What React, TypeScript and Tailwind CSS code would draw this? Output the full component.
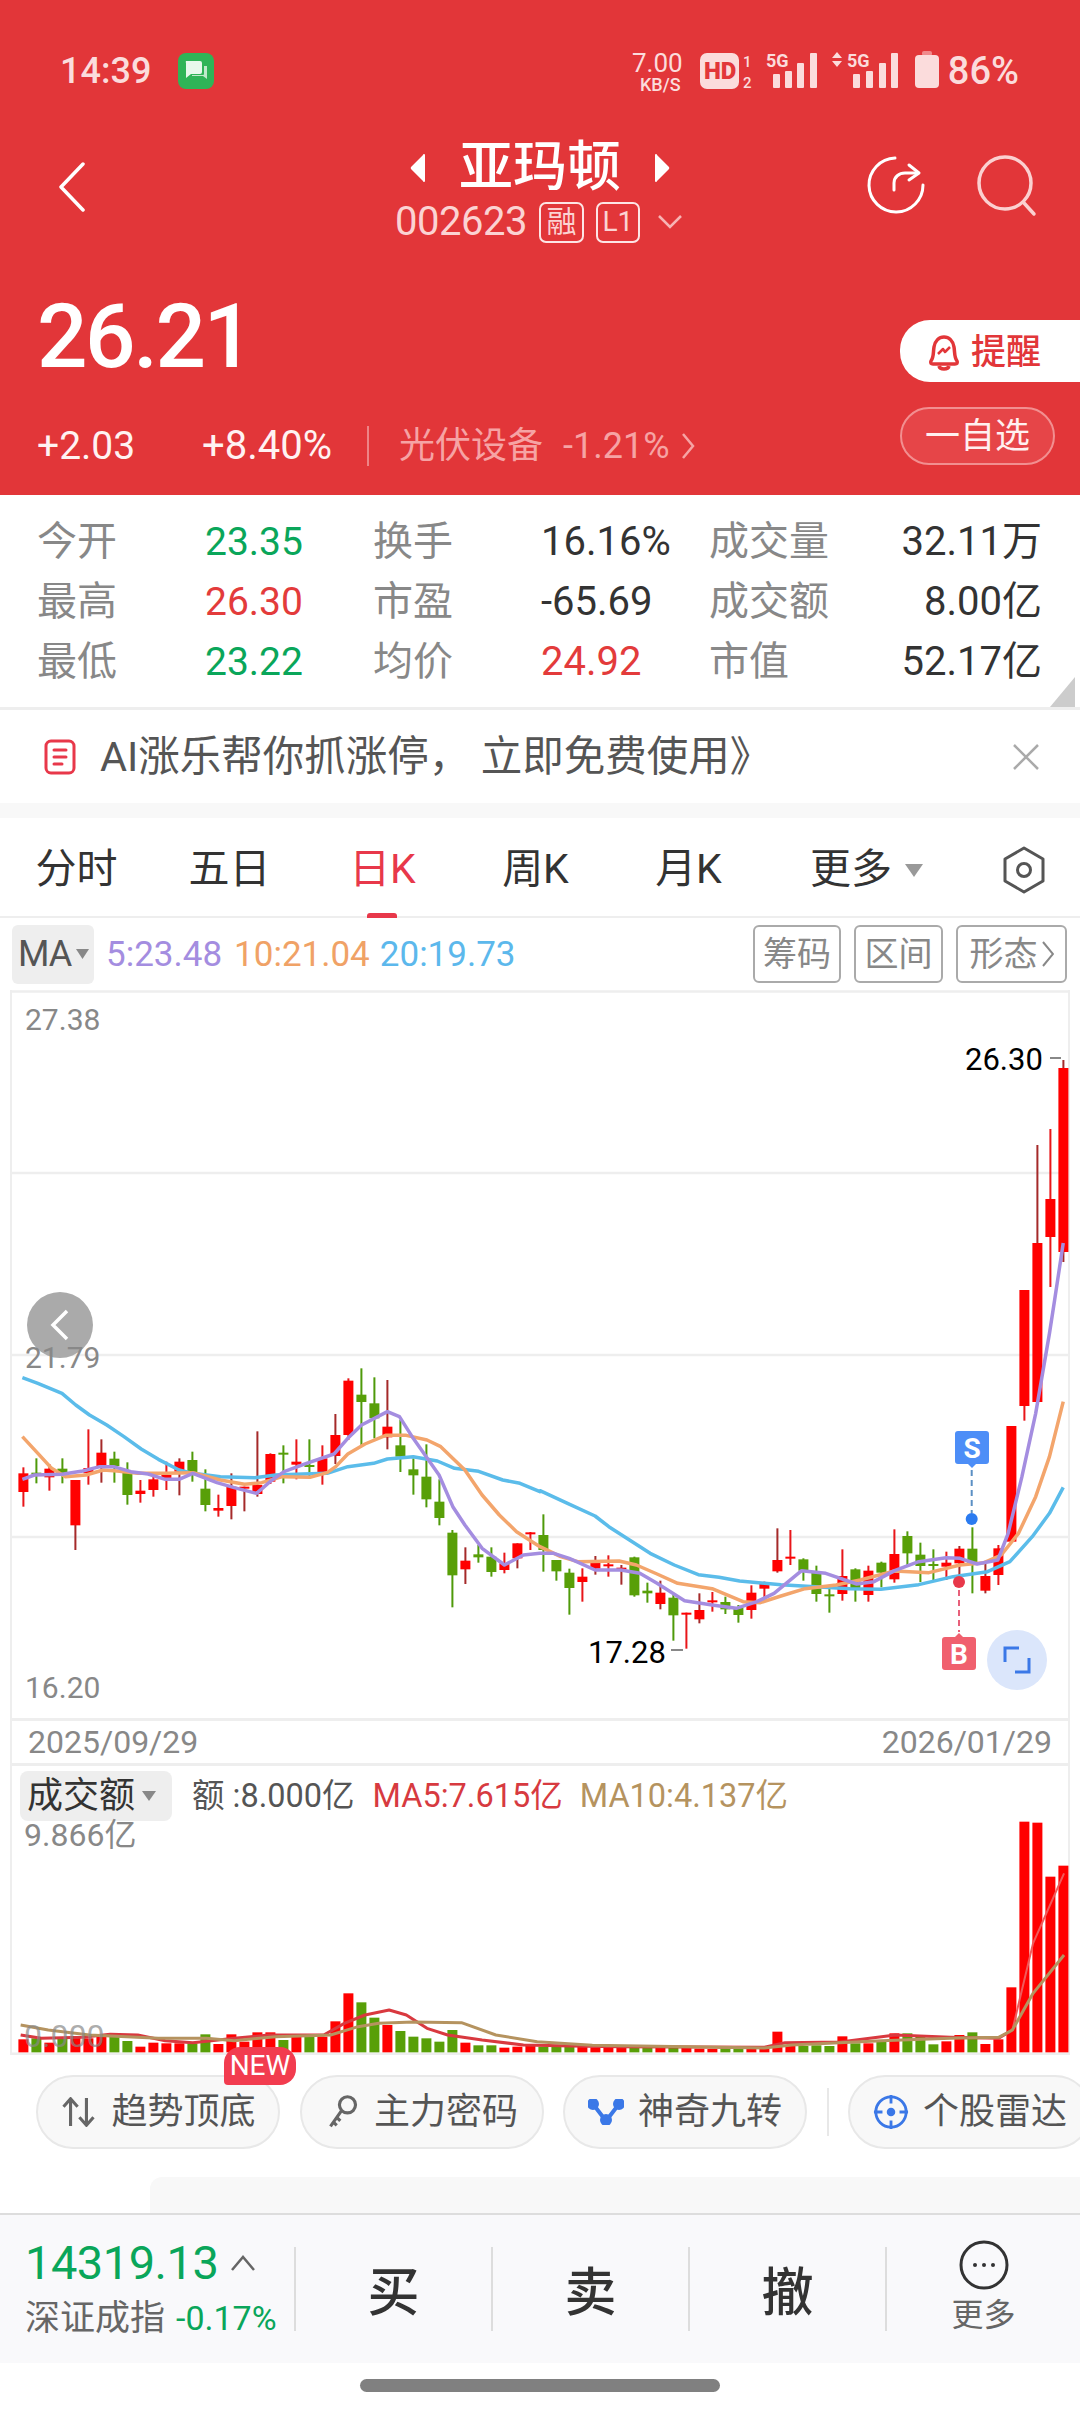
const FONT = "font-['Roboto','Noto_Sans_CJK_SC',sans-serif]";

type Color = 'r' | 'g';
// high, low, body top, body bottom, colour, dark wick. y values are 3x offsets from y=1300
type Candle = [number, number, number, number, Color, number?];

const CANDLES: Candle[] = [
  [502, 620, 520, 576, 'r'], [475, 550, 518, 522, 'g'], [492, 572, 506, 532, 'r'], [475, 550, 506, 520, 'g'],
  [540, 750, 540, 676, 'r', 1], [388, 554, 504, 520, 'r'], [418, 548, 458, 500, 'r', 1], [455, 548, 476, 498, 'g'],
  [487, 614, 514, 585, 'g'], [540, 608, 572, 582, 'r'], [530, 590, 538, 570, 'r'], [485, 570, 525, 535, 'r'],
  [475, 586, 485, 515, 'r', 1], [455, 545, 480, 518, 'g'], [508, 634, 566, 615, 'g'], [584, 650, 624, 632, 'r'],
  [520, 658, 560, 618, 'r', 1], [560, 634, 560, 562, 'r', 1], [394, 590, 555, 582, 'r', 1], [460, 552, 462, 545, 'r'],
  [436, 550, 458, 464, 'g'], [418, 538, 485, 494, 'r'], [418, 535, 495, 500, 'g'], [436, 554, 475, 520, 'r'],
  [342, 492, 405, 468, 'r', 1], [235, 420, 242, 405, 'r'], [205, 435, 284, 306, 'g'], [232, 415, 310, 355, 'g'],
  [240, 448, 380, 412, 'r', 1], [360, 516, 436, 470, 'g'], [475, 584, 508, 526, 'g'], [433, 622, 530, 598, 'g'],
  [538, 676, 605, 654, 'g'], [690, 922, 698, 826, 'g'], [742, 852, 782, 808, 'r', 1], [735, 788, 763, 772, 'g'],
  [742, 830, 770, 816, 'g'], [758, 820, 790, 810, 'r'], [730, 805, 730, 775, 'r', 1], [696, 750, 697, 702, 'r'],
  [643, 815, 705, 750, 'g'], [780, 842, 780, 814, 'g'], [806, 944, 818, 864, 'g'], [805, 905, 830, 846, 'r'],
  [768, 824, 788, 806, 'r', 1], [766, 830, 793, 797, 'r'], [795, 854, 803, 806, 'r', 1], [770, 890, 772, 886, 'g'],
  [848, 908, 872, 880, 'g'], [842, 928, 878, 912, 'r', 1], [885, 1022, 893, 946, 'g'], [938, 1046, 938, 944, 'r'],
  [880, 970, 930, 958, 'r', 1], [876, 935, 901, 905, 'r'], [890, 942, 906, 928, 'g'], [915, 968, 922, 945, 'g'],
  [856, 956, 878, 930, 'r'], [845, 895, 848, 866, 'r'], [685, 818, 780, 814, 'r', 1], [690, 795, 770, 774, 'r'],
  [775, 842, 778, 812, 'g'], [797, 905, 818, 882, 'g'], [860, 938, 883, 887, 'g'], [748, 902, 828, 882, 'r'],
  [805, 905, 808, 866, 'g'], [797, 905, 812, 885, 'r'], [785, 862, 788, 818, 'g'], [688, 848, 762, 838, 'r'],
  [694, 800, 708, 760, 'g'], [728, 846, 764, 798, 'g'], [748, 846, 792, 796, 'g'], [755, 840, 788, 800, 'r'],
  [738, 860, 746, 790, 'r', 1], [682, 880, 746, 790, 'g'], [790, 880, 828, 872, 'r', 1], [735, 855, 745, 825, 'r'],
  [378, 725, 378, 725, 'r'], [-30, 362, -30, 318, 'r'], [-465, 306, -171, 306, 'r', 1], [-513, -39, -303, -189, 'r'],
  [-720, -114, -696, -144, 'r', 1],
];

const VOLUME_TOPS = [
  1018, 1015, 1028, 1012, 1012, 1015, 1008, 1010, 1023, 1040, 1028, 1030, 1030, 1030, 1003, 1032, 1003, 1025, 997, 997,
  1020, 1005, 1003, 1010, 964, 880, 907, 953, 975, 993, 1010, 1015, 1025, 990, 1028, 1036, 1036, 1043, 1040, 1037, 1040,
  1036, 1034, 1040, 1042, 1042, 1044, 1040, 1044, 1044, 1042, 1040, 1046, 1047, 1045, 1046, 1040, 1045, 995, 1037, 1038,
  1036, 1038, 1009, 1030, 1030, 1022, 1000, 1000, 1008, 1033, 1024, 1005, 997, 1032, 1018, 862, 365, 368, 530, 497,
];

type Pt = [number, number];

const BLUE_L: Pt[] = [[65, 233], [110, 250], [180, 280], [220, 315], [260, 345], [310, 375], [360, 410], [410, 447], [460, 478], [520, 510], [560, 520], [640, 530], [740, 533], [800, 525], [880, 522], [950, 520], [1010, 500], [1085, 490], [1125, 477], [1200, 470], [1270, 483], [1320, 505], [1390, 514], [1460, 540], [1510, 550], [1568, 575]];
const BLUE_R: Pt[] = [[0, 572], [80, 610], [160, 648], [200, 680], [260, 720], [320, 760], [390, 795], [460, 824], [520, 832], [580, 843], [700, 854], [800, 860], [900, 866], [990, 868], [1100, 854], [1200, 830], [1300, 815], [1365, 785], [1430, 710], [1480, 640], [1520, 562]];
const ORANGE_L: Pt[] = [[65, 410], [110, 460], [150, 505], [190, 530], [250, 525], [300, 510], [340, 513], [400, 520], [480, 520], [560, 518], [640, 540], [710, 553], [760, 548], [820, 530], [900, 532], [950, 518], [975, 500], [1010, 462], [1060, 432], [1120, 406], [1180, 406], [1240, 420], [1280, 440], [1350, 510], [1400, 585], [1450, 645], [1500, 695], [1568, 740]];
const ORANGE_R: Pt[] = [[0, 740], [60, 770], [110, 785], [230, 783], [280, 795], [340, 822], [400, 850], [500, 866], [590, 905], [640, 908], [700, 888], [770, 866], [860, 855], [930, 840], [1030, 813], [1130, 818], [1220, 795], [1290, 788], [1340, 765], [1390, 700], [1440, 590], [1480, 470], [1520, 305]];
const PURPLE_L: Pt[] = [[65, 538], [100, 525], [180, 523], [240, 513], [290, 500], [330, 500], [380, 515], [430, 522], [480, 538], [520, 538], [560, 520], [630, 548], [680, 563], [745, 580], [790, 540], [825, 515], [890, 490], [970, 462], [1010, 415], [1050, 375], [1125, 335], [1160, 350], [1200, 415], [1275, 525], [1315, 620], [1350, 675], [1400, 745], [1465, 795], [1520, 765], [1568, 760]];
const PURPLE_R: Pt[] = [[0, 760], [40, 760], [85, 775], [160, 810], [235, 810], [290, 820], [340, 850], [420, 902], [500, 915], [570, 925], [630, 905], [680, 880], [760, 812], [830, 820], [920, 852], [970, 845], [1030, 812], [1100, 785], [1180, 773], [1220, 775], [1270, 792], [1330, 780], [1360, 700], [1400, 530], [1440, 340], [1480, 100], [1495, 0], [1520, -171]];

const VOL_MA5: Pt[] = [[30, 1005], [60, 1015], [120, 1012], [160, 1003], [200, 1005], [240, 1022], [280, 1028], [340, 1015], [390, 1005], [470, 1005], [500, 970], [530, 945], [565, 930], [590, 945], [620, 985], [650, 1005], [700, 1020], [760, 1035], [830, 1038], [900, 1040], [1110, 1042], [1140, 1028], [1220, 1026], [1300, 1005], [1380, 1012], [1450, 1015], [1470, 990]];
const VOL_MA5_TAIL: Pt[] = [[1470, 990], [1500, 730], [1545, 520]];
const VOL_MA10: Pt[] = [[30, 975], [70, 990], [130, 1005], [230, 1015], [300, 1015], [340, 1022], [400, 1010], [480, 1005], [520, 980], [550, 970], [600, 966], [670, 968], [720, 1005], [780, 1025], [860, 1036], [1000, 1040], [1110, 1044], [1150, 1035], [1280, 1022], [1380, 1015], [1450, 1012], [1470, 990], [1500, 880], [1545, 765]];

const y3 = (v: number) => 1300 + v / 3;
const candleX = (i: number) => 23.4 + i * 13;
const toPoints = (left: Pt[], right: Pt[]) =>
  [...left.map(([x, y]) => `${x / 2.904},${y3(y)}`), ...right.map(([x, y]) => `${540 + x / 2.905},${y3(y)}`)].join(' ');
const volPoints = (pts: Pt[]) => pts.map(([x, y]) => `${x / 1.452},${y / 3}`).join(' ');

function StatusBar() {
  return (
    <div className="flex h-[140px] items-center justify-between pl-[60px] pr-[61px] pt-[2px] text-[#fbdcdc]">
      <div className="flex items-center gap-[27px]">
        <span className="text-[36px] font-medium leading-none">14:39</span>
        <svg width="36" height="36" viewBox="0 0 36 36">
          <rect width="36" height="36" rx="8" fill="#2fb457" />
          <path d="M8 8h14a2 2 0 0 1 2 2v9a2 2 0 0 1-2 2H13l-5 4V10a2 2 0 0 1 0-2z" fill="#e8f8ec" />
          <path d="M26 13h3v13l-4-3H14v-1h11a1 1 0 0 0 1-1z" fill="#bfe9cb" />
        </svg>
      </div>
      <div className="flex items-center gap-[8px]">
        <svg width="310" height="50" viewBox="628 45 310 50" fill="#fbdcdc">
          <text x="630" y="71" fontSize="26" fontFamily="Roboto">7.00</text>
          <text x="638" y="90" fontSize="18" fontWeight="500" fontFamily="Roboto">KB/S</text>
          <rect x="698" y="52" width="39" height="36" rx="7" />
          <text x="702" y="78" fontSize="24" fontWeight="900" fontFamily="Roboto" fill="#e23639">HD</text>
          <text x="741" y="66" fontSize="15" fontWeight="500" fontFamily="Roboto">1</text>
          <text x="741" y="87" fontSize="15" fontWeight="500" fontFamily="Roboto">2</text>
          <text x="764" y="66" fontSize="18" fontWeight="700" fontFamily="Roboto">5G</text>
          <rect x="771" y="73" width="7" height="14" rx="1" />
          <rect x="783" y="70" width="7" height="17" rx="1" />
          <rect x="795" y="62" width="7" height="25" rx="1" />
          <rect x="808" y="52" width="7" height="35" rx="1" />
          <path d="M835 51l5 6h-10zM835 66l5-6h-10z" />
          <text x="845" y="66" fontSize="18" fontWeight="700" fontFamily="Roboto">5G</text>
          <rect x="851" y="73" width="7" height="14" rx="1" />
          <rect x="864" y="70" width="7" height="17" rx="1" />
          <rect x="877" y="62" width="7" height="25" rx="1" />
          <rect x="889" y="52" width="7" height="35" rx="1" />
          <rect x="920" y="50" width="10" height="5" rx="2" fill="#f08a8c" />
          <rect x="913" y="54" width="24" height="33" rx="4" />
        </svg>
        <span className="text-[38px] font-medium leading-none">86%</span>
      </div>
    </div>
  );
}

function NavRow() {
  return (
    <div className="grid h-[105px] grid-cols-[1fr_auto_1fr]">
      <div className="flex items-start pl-[58px] pt-[22px]">
        <svg width="28" height="50" viewBox="0 0 28 50" fill="none" stroke="#fff" strokeWidth="3.5" strokeLinecap="round" strokeLinejoin="round">
          <path d="M25 2 3 25l22 23" />
        </svg>
      </div>
      <div className="flex flex-col items-center">
        <div className="flex h-[56px] items-center gap-[32px] text-white">
          <svg width="18" height="28" viewBox="0 0 18 28" fill="#fff">
            <path d="M16 1v26a1 1 0 0 1-2 0L2 15a2 2 0 0 1 0-2L14 1a1 1 0 0 1 2 0z" />
          </svg>
          <span className="text-[54px] font-medium leading-none">亚玛顿</span>
          <svg width="18" height="28" viewBox="0 0 18 28" fill="#fff">
            <path d="M2 1v26a1 1 0 0 0 2 0l12-12a2 2 0 0 0 0-2L4 1a1 1 0 0 0-2 0z" />
          </svg>
        </div>
        <div className="-ml-[3px] mt-[5px] flex h-[42px] items-center text-[#fbd3d3]">
          <span className="text-[40px] leading-none tracking-[-0.5px]">002623</span>
          <span className="ml-[12px] flex h-[41px] w-[45px] items-center justify-center rounded-[7px] border-2 border-[#fde5e5] text-[30px] leading-none">融</span>
          <span className="ml-[12px] flex h-[41px] w-[44px] items-center justify-center rounded-[7px] border-2 border-[#fde5e5] text-[28px] leading-none">L1</span>
          <svg className="ml-[18px]" width="24" height="14" viewBox="0 0 24 14" fill="none" stroke="#f7b4b4" strokeWidth="2.5">
            <path d="m1 1 11 11L23 1" />
          </svg>
        </div>
      </div>
      <div className="flex items-start justify-end gap-[50px] pr-[42px] pt-[15px]">
        <svg className="-ml-[3px]" width="60" height="60" viewBox="0 0 60 60" fill="none" stroke="#fff" strokeWidth="3" strokeLinecap="round" strokeLinejoin="round">
          <path d="M29 3a27 27 0 1 0 28 27" />
          <path d="M28 35v-7c0-6 5-10 11-10h12" />
          <path d="m43 10 10 8-10 7" />
        </svg>
        <svg width="62" height="62" viewBox="0 0 62 62" fill="none" stroke="#fbd0d0" strokeWidth="3.5" strokeLinecap="round">
          <circle cx="29" cy="28" r="26" />
          <path d="m48 48 10 11" />
        </svg>
      </div>
    </div>
  );
}

function PriceRow() {
  return (
    <div className="flex h-[250px] justify-between">
      <div className="pl-[37px] pt-[50px]">
        <div className="h-[84px] text-[89px] font-medium leading-[84px] tracking-[-2.5px] text-white">26.21</div>
        <div className="mt-[47px] flex h-[40px] items-center">
          <span className="w-[165px] text-[39px] leading-none text-[#fff2f2]">+2.03</span>
          <span className="w-[165px] text-[40px] leading-none text-[#fff2f2]">+8.40%</span>
          <span className="h-[40px] w-[2px] bg-[#ee8486]" />
          <span className="ml-[30px] text-[36px] leading-none text-[#f6a3a4]">光伏设备</span>
          <span className="ml-[20px] text-[36px] leading-none text-[#f6a3a4]">-1.21%</span>
          <svg className="ml-[11px]" width="14" height="28" viewBox="0 0 14 28" fill="none" stroke="#f6a3a4" strokeWidth="2.5">
            <path d="m2 2 10 12L2 26" />
          </svg>
        </div>
      </div>
      <div className="flex flex-col items-end pt-[75px]">
        <div className="flex h-[62px] w-[180px] items-center gap-[9px] rounded-l-[30px] bg-white pl-[26px] pt-[3px]">
          <svg width="36" height="40" viewBox="0 0 36 40" fill="none" stroke="#e23639" strokeWidth="3.5" strokeLinejoin="round">
            <path d="M5 28c3-4 2-8 3-14 1-6 5-10 10-10s9 4 10 10c1 6 0 10 3 14 1 2 0 3-2 3H7c-2 0-3-1-2-3z" />
            <path d="M13 33c1 4 9 4 10 0" />
            <path d="m12 21 5-5 2 3 5-5" strokeWidth="2.5" />
          </svg>
          <span className="text-[35px] font-medium leading-none text-[#e23639]">提醒</span>
        </div>
        <div className="mr-[25px] mt-[25px] flex h-[58px] w-[155px] items-center justify-center rounded-[29px] border-2 border-[#f28f90] bg-[#e64548] text-[35px] leading-none text-[#fff0f0]">
          一自选
        </div>
      </div>
    </div>
  );
}

const STATS = [
  ['今开', '23.35', 'text-[#0aa65a]', '换手', '16.16%', 'text-[#333]', '成交量', '32.11万'],
  ['最高', '26.30', 'text-[#e33b3b]', '市盈', '-65.69', 'text-[#333]', '成交额', '8.00亿'],
  ['最低', '23.22', 'text-[#0aa65a]', '均价', '24.92', 'text-[#e33b3b]', '市值', '52.17亿'],
];

function Stats() {
  return (
    <div className="relative h-[212px] pl-[37px] pr-[38px] pt-[17px]">
      {STATS.map((row) => (
        <div key={row[0]} className="grid h-[60px] grid-cols-[168px_168px_168px_168px_168px_1fr] items-center text-[40px] leading-none">
          <span className="text-[#888]">{row[0]}</span>
          <span className={`text-[39px] ${row[2]}`}>{row[1]}</span>
          <span className="text-[#888]">{row[3]}</span>
          <span className={row[5]}>{row[4]}</span>
          <span className="text-[#888]">{row[6]}</span>
          <span className="text-right text-[#333]">{row[7]}</span>
        </div>
      ))}
      <svg className="absolute bottom-0 right-[5px]" width="25" height="30" viewBox="0 0 25 30" fill="#ccc">
        <path d="M25 0v30H0z" />
      </svg>
    </div>
  );
}

function Banner() {
  return (
    <>
      <div className="flex h-[96px] items-center border-t-[3px] border-[#eee] pl-[44px] pr-[40px]">
        <svg width="32" height="36" viewBox="0 0 32 36" fill="none" stroke="#e8384a" strokeWidth="3" strokeLinecap="round">
          <rect x="2" y="2" width="28" height="32" rx="5" />
          <path d="M10 11h12M10 18h12M10 25h8" />
        </svg>
        <span className="ml-[24px] text-[41.5px] leading-none text-[#555]">AI涨乐帮你抓涨停， 立即免费使用》</span>
        <svg className="ml-auto" width="28" height="26" viewBox="0 0 28 26" fill="none" stroke="#aaa" strokeWidth="2.5">
          <path d="m2 1 24 24M26 1 2 25" />
        </svg>
      </div>
      <div className="h-[15px] bg-[#f8f8f8]" />
    </>
  );
}

const TABS = ['分时', '五日', '日K', '周K', '月K'];

function Tabs() {
  return (
    <div className="relative flex h-[100px] items-center border-b-[2px] border-[#eee] pt-[5px]">
      {TABS.map((tab) => (
        <div key={tab} className={`flex w-[153px] justify-center text-[41px] leading-none ${tab === '日K' ? 'text-[#e8384a]' : 'text-[#333]'}`}>
          {tab}
        </div>
      ))}
      <div className="ml-[45px] flex items-center gap-[12px] text-[41px] leading-none text-[#333]">
        更多
        <svg width="20" height="14" viewBox="0 0 20 14" fill="#999">
          <path d="M1 1h18l-9 13z" />
        </svg>
      </div>
      <svg className="ml-auto mr-[34px]" width="44" height="48" viewBox="0 0 44 48" fill="none" stroke="#555" strokeWidth="3">
        <path d="M22 2 41 13v22L22 46 3 35V13z" strokeLinejoin="round" />
        <circle cx="22" cy="24" r="6.5" />
      </svg>
      <span className="absolute bottom-[-2px] left-[367px] h-[5px] w-[30px] rounded-t-[3px] bg-[#e8384a]" />
    </div>
  );
}

function MaRow() {
  return (
    <div className="flex h-[72px] items-center pl-[12px] pr-[13px] text-[35px] leading-none">
      <div className="flex h-[59px] w-[82px] items-center rounded-[6px] bg-[#eee] pl-[6px] text-[#555]">
        <span className="text-[36px] tracking-[-1px]">MA</span>
        <svg className="ml-[5px]" width="13" height="10" viewBox="0 0 13 10" fill="#888">
          <path d="M0 0h13L6.500 10z" />
        </svg>
      </div>
      <span className="ml-[12px] text-[#a48de0]">5:23.48</span>
      <span className="ml-[12px] text-[#f0a266]">10:21.04</span>
      <span className="ml-[10px] text-[#5cb8ec]">20:19.73</span>
      <div className="ml-auto flex gap-[13px] text-[34px] text-[#888]">
        <span className="flex h-[58px] w-[88px] items-center justify-center rounded-[6px] border-2 border-[#aaa]">筹码</span>
        <span className="flex h-[58px] w-[89px] items-center justify-center rounded-[6px] border-2 border-[#aaa]">区间</span>
        <span className="flex h-[58px] w-[111px] items-center justify-center gap-[4px] rounded-[6px] border-2 border-[#aaa]">
          形态
          <svg width="12" height="26" viewBox="0 0 12 26" fill="none" stroke="#888" strokeWidth="2">
            <path d="m1 1 10 12L1 25" />
          </svg>
        </span>
      </div>
    </div>
  );
}

function KChart() {
  return (
    <div className={`relative h-[728px] ${FONT}`}>
      <svg className="block" width="1080" height="728" viewBox="0 990 1080 728">
        <path d="M10 991.500H1069M10 1173H1069M10 1355H1069M10 1537H1069" stroke="#eee" strokeWidth="2.500" />
        <path d="M11 990V1718M1069 990V1718" stroke="#eee" strokeWidth="2" />
        {CANDLES.map(([high, low, top, bot, color, dark], i) => {
          const x = candleX(i);
          const fill = color === 'r' ? '#ff0000' : '#589f08';
          const wick = color === 'g' ? '#4f9a0a' : dark ? '#a52a2a' : '#e8161a';
          return (
            <g key={i}>
              <rect x={x - 1} y={y3(high)} width="2" height={(low - high) / 3} fill={wick} />
              <rect x={x - 5} y={y3(top)} width="10" height={Math.max((bot - top) / 3, 2)} fill={fill} />
            </g>
          );
        })}
        <polyline points={toPoints(BLUE_L, BLUE_R)} fill="none" stroke="#5bbcea" strokeWidth="3.500" strokeLinejoin="round" />
        <polyline points={toPoints(ORANGE_L, ORANGE_R)} fill="none" stroke="#f3a56c" strokeWidth="3.500" strokeLinejoin="round" />
        <polyline points={toPoints(PURPLE_L, PURPLE_R)} fill="none" stroke="#a48de0" strokeWidth="3.500" strokeLinejoin="round" />
        {/* S marker */}
        <path d="M958 1431h28a3 3 0 0 1 3 3v27a3 3 0 0 1-3 3h-10l-4 4-4-4h-10a3 3 0 0 1-3-3v-27a3 3 0 0 1 3-3z" fill="#4d8ef7" />
        <text x="972" y="1458" textAnchor="middle" fontSize="28" fontWeight="700" fill="#fff" fontFamily="Roboto">S</text>
        <path d="M971.700 1470V1513" stroke="#5b8fc4" strokeWidth="2" strokeDasharray="6 4" />
        <circle cx="971.700" cy="1519" r="6" fill="#2b7bf0" />
        {/* B marker */}
        <path d="M945 1637h10l4-4 4 4h10a3 3 0 0 1 3 3v27a3 3 0 0 1-3 3h-28a3 3 0 0 1-3-3v-27a3 3 0 0 1 3-3z" fill="#f0606e" />
        <text x="959" y="1664" textAnchor="middle" fontSize="28" fontWeight="700" fill="#fff" fontFamily="Roboto">B</text>
        <path d="M959 1590V1632" stroke="#e8607a" strokeWidth="2" strokeDasharray="6 4" />
        <circle cx="959" cy="1582" r="6" fill="#e8384a" />
        <path d="M1050 1058h11M671 1650h12" stroke="#888" strokeWidth="2" />
      </svg>
      <span className="absolute left-[25px] top-[15px] text-[30px] leading-none text-[#888]">27.38</span>
      <div className="absolute left-[27px] top-[302px] flex h-[66px] w-[66px] items-center justify-center rounded-full bg-[#aaa]">
        <svg width="20" height="32" viewBox="0 0 20 32" fill="none" stroke="#fff" strokeWidth="3.500">
          <path d="M17 2 3 16l14 14" />
        </svg>
      </div>
      <span className="absolute left-[25px] top-[353px] text-[30px] leading-none text-[#888]">21.79</span>
      <span className="absolute left-[25px] top-[683px] text-[30px] leading-none text-[#888]">16.20</span>
      <span className="absolute left-[965px] top-[54px] text-[31px] leading-none text-black">26.30</span>
      <span className="absolute left-[588px] top-[647px] text-[31px] leading-none text-black">17.28</span>
      <div className="absolute left-[987px] top-[640px] flex h-[60px] w-[60px] items-center justify-center rounded-full bg-[#dbe6fb]">
        <svg width="28" height="28" viewBox="0 0 28 28" fill="none" stroke="#3b78e7" strokeWidth="3">
          <path d="M16 2H2v14M12 26h14V12" />
        </svg>
      </div>
    </div>
  );
}

function DateRow() {
  return (
    <div className="mx-[10px] flex h-[48px] w-[1060px] items-center justify-between border-x-2 border-y-[3px] border-[#eee] pl-[16px] pr-[16px] text-[32px] leading-none text-[#888]">
      <span>2025/09/29</span>
      <span>2026/01/29</span>
    </div>
  );
}

function VolumeChart() {
  return (
    <div className="relative h-[289px]">
      <svg className="block" width="1080" height="289" viewBox="0 1766 1080 289">
        <path d="M11 1766V2055M1069 1766V2055" stroke="#eee" strokeWidth="2" />
        <path d="M10 2054H1070" stroke="#eee" strokeWidth="3" />
        <g transform="translate(0 1700)">
          {VOLUME_TOPS.map((top, i) => (
            <rect
              key={i}
              x={candleX(i) - 5}
              y={top / 3}
              width="10"
              height={(1057 - top) / 3}
              fill={CANDLES[i][4] === 'r' ? '#ff0000' : '#589f08'}
            />
          ))}
          <polyline points={volPoints(VOL_MA5)} fill="none" stroke="#d9393f" strokeWidth="3" strokeLinejoin="round" />
          <polyline points={volPoints(VOL_MA5_TAIL)} fill="none" stroke="#f05a5a" strokeWidth="2" />
          <polyline points={volPoints(VOL_MA10)} fill="none" stroke="#b5935f" strokeWidth="3" strokeLinejoin="round" />
        </g>
      </svg>
      <div className="absolute left-[20px] top-[5px] flex h-[50px] w-[152px] items-center rounded-[8px] bg-[#eee] pl-[7px] text-[36px] leading-none text-[#333]">
        成交额
        <svg className="ml-[7px]" width="14" height="10" viewBox="0 0 14 10" fill="#888">
          <path d="M0 0h14L7 10z" />
        </svg>
      </div>
      <div className="absolute left-[192px] top-[14px] flex text-[32.5px] leading-none">
        <span className="text-[#555]">额 :8.000亿</span>
        <span className="ml-[18px] text-[#d73a40]">MA5:7.615亿</span>
        <span className="ml-[17px] text-[#b5935f]">MA10:4.137亿</span>
      </div>
      <span className="absolute left-[24px] top-[53px] text-[32px] leading-none text-[#888]">9.866亿</span>
      <span className="absolute left-[24px] top-[254px] text-[32px] leading-none text-[#888]/70">0.000</span>
    </div>
  );
}

function Pill({ icon, label }: { icon: React.ReactNode; label: string }) {
  return (
    <div className="flex h-[74px] w-[244px] shrink-0 items-center justify-center gap-[14px] rounded-[37px] border-2 border-[#e8e8e8] bg-[#f8f8f8] text-[36px] leading-none text-[#555]">
      {icon}
      <span className="whitespace-nowrap">{label}</span>
    </div>
  );
}

function QuickRow() {
  return (
    <div className="relative flex h-[122px] items-start overflow-hidden pl-[36px] pt-[20px]">
      <Pill
        label="趋势顶底"
        icon={
          <svg width="37" height="30" viewBox="0 0 38 34" fill="none" stroke="#666" strokeWidth="3.500">
            <path d="M10 33V3M2 11l8-9 8 9M28 1v30M20 23l8 9 8-9" />
          </svg>
        }
      />
      <div className="ml-[20px]">
        <Pill
          label="主力密码"
          icon={
            <svg width="34" height="34" viewBox="0 0 34 38" fill="none" stroke="#666" strokeWidth="3.500">
              <circle cx="22" cy="11" r="9" />
              <path d="M15 18 3 35M6 30l4 4M10 25l4 4" />
            </svg>
          }
        />
      </div>
      <div className="ml-[19px]">
        <Pill
          label="神奇九转"
          icon={
            <svg width="36" height="26" viewBox="0 0 36 26" fill="none" stroke="#3b78e7" strokeWidth="4">
              <path d="m5 5 13 17L31 5" />
              <circle cx="5" cy="5" r="4" fill="#3b78e7" />
              <circle cx="31" cy="5" r="4" fill="#3b78e7" />
              <circle cx="18" cy="21" r="4" fill="#3b78e7" />
            </svg>
          }
        />
      </div>
      <span className="ml-[20px] mt-[13px] h-[48px] w-[2px] shrink-0 bg-[#e8e8e8]" />
      <div className="ml-[19px]">
        <Pill
          label="个股雷达"
          icon={
            <svg width="36" height="36" viewBox="0 0 38 38" fill="none" stroke="#3b78e7" strokeWidth="3">
              <circle cx="19" cy="19" r="16" />
              <path d="M19 1v9M19 28v9M1 19h9M28 19h9" />
              <circle cx="19" cy="19" r="3" fill="#3b78e7" />
            </svg>
          }
        />
      </div>
    </div>
  );
}

function BottomBar() {
  const actions = ['买', '卖', '撤'];
  return (
    <div className="flex h-[150px] items-center border-t-2 border-[#ddd] bg-[#f9f9fb]">
      <div className="-mt-[3px] h-[100px] w-[294px] pl-[25px]">
        <div className="flex h-[50px] items-center">
          <span className="text-[47px] leading-none tracking-[-0.5px] text-[#0aa65a]">14319.13</span>
          <svg className="ml-[12px]" width="26" height="16" viewBox="0 0 26 16" fill="none" stroke="#666" strokeWidth="2.500">
            <path d="m2 15 11-13 11 13" />
          </svg>
        </div>
        <div className="mt-[13px] flex items-center leading-none">
          <span className="text-[35px] text-[#666]">深证成指</span>
          <span className="ml-[11px] text-[34px] text-[#0aa65a]">-0.17%</span>
        </div>
      </div>
      {actions.map((a) => (
        <div key={a} className="flex h-[84px] w-[197px] items-center justify-center border-l-2 border-[#ddd] pt-[10px] text-[52px] font-medium leading-none text-[#333]">
          {a}
        </div>
      ))}
      <div className="flex h-[84px] flex-1 flex-col items-center border-l-2 border-[#ddd]">
        <svg className="-mt-[7px]" width="50" height="50" viewBox="0 0 50 50" fill="none" stroke="#333" strokeWidth="3">
          <circle cx="25" cy="25" r="23" />
          <circle cx="16" cy="25" r="2" fill="#333" stroke="none" />
          <circle cx="25" cy="25" r="2" fill="#333" stroke="none" />
          <circle cx="34" cy="25" r="2" fill="#333" stroke="none" />
        </svg>
        <span className="mt-[9px] text-[32px] leading-none text-[#666]">更多</span>
      </div>
    </div>
  );
}

export default function App() {
  return (
    <div className={`relative h-[2412px] w-[1080px] overflow-hidden bg-white ${FONT}`}>
      <div className="h-[495px] bg-[#e23639]">
        <StatusBar />
        <NavRow />
        <PriceRow />
      </div>
      <Stats />
      <Banner />
      <Tabs />
      <MaRow />
      <KChart />
      <DateRow />
      <VolumeChart />
      <QuickRow />
      <div className="ml-[150px] h-[36px] rounded-tl-[12px] bg-[#f8f8f8]" />
      <BottomBar />
      <div className="flex h-[49px] justify-center pt-[16px]">
        <div className="h-[13px] w-[360px] rounded-full bg-[#808080]" />
      </div>
      {/* NEW badge sits on top of the first pill */}
      <div className="absolute left-[224px] top-[2047px] flex h-[38px] w-[72px] items-center justify-center rounded-t-[16px] rounded-br-[16px] rounded-bl-[4px] bg-[#f23c4f] text-[28px] leading-none text-white">
        NEW
      </div>
    </div>
  );
}
